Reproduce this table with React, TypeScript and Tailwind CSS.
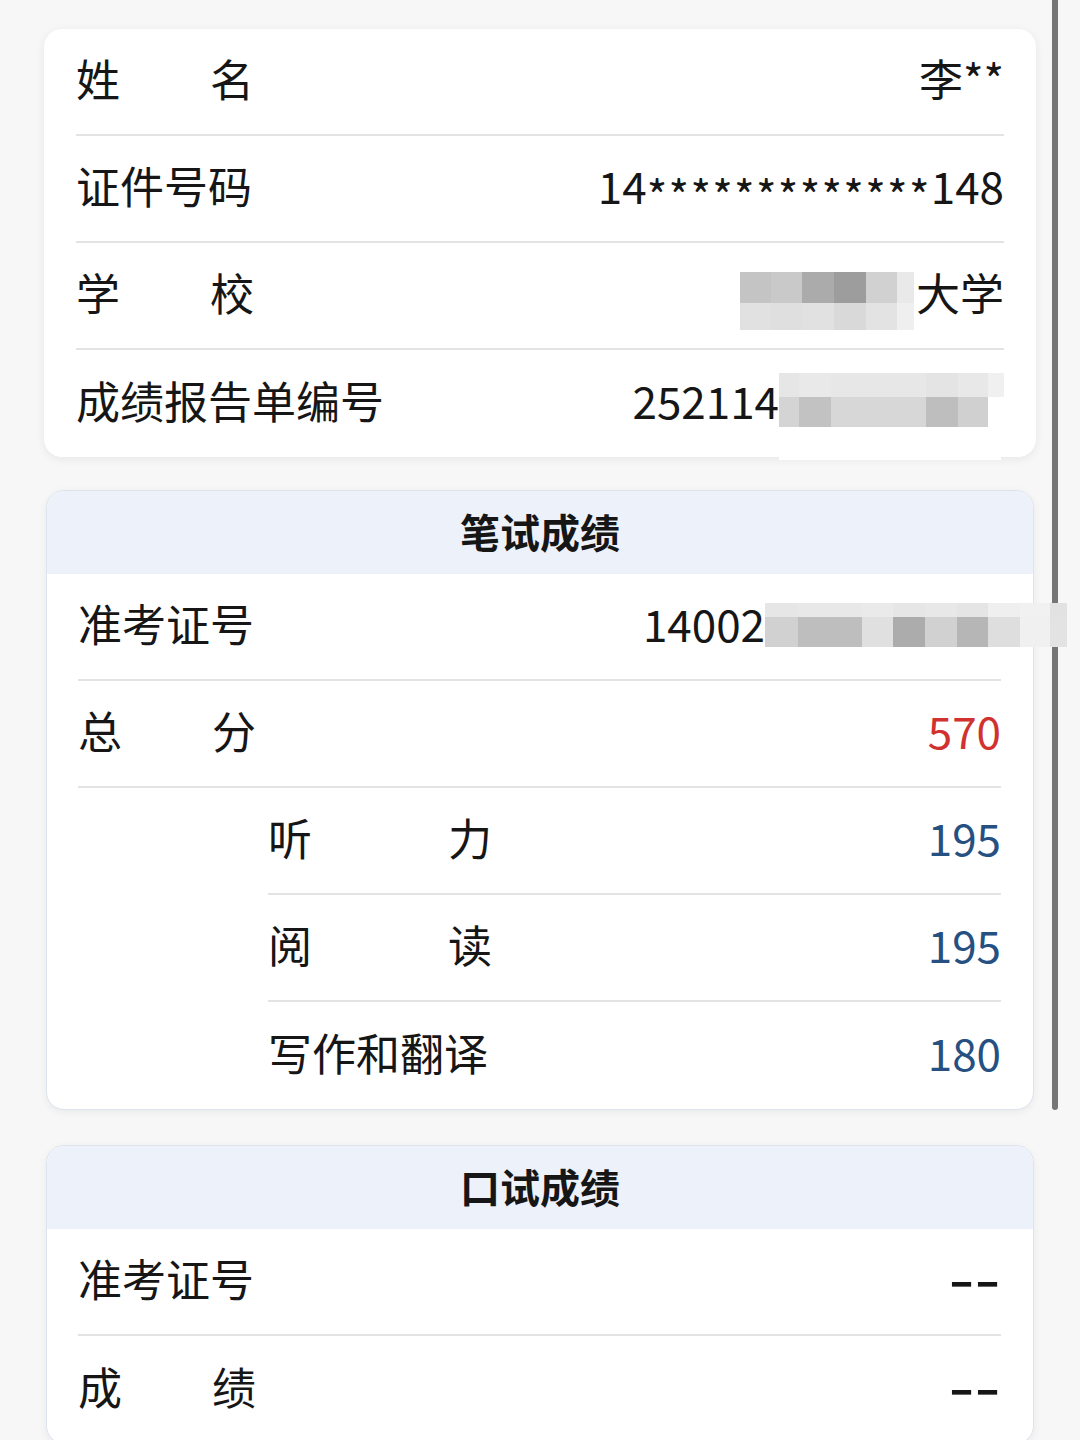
import React from "react";

const FONT = { fontFamily: '"Noto Sans CJK SC", "Noto Sans", sans-serif' };

type Cell = [number, string];

function Mosaic({ top, bottom, topH, bottomH }: { top: Cell[]; bottom: Cell[]; topH: number; bottomH: number }) {
  return (
    <span className="flex flex-col">
      <span className="flex">
        {top.map(([w, c], i) => (
          <span key={i} style={{ width: w, height: topH, background: c }} />
        ))}
      </span>
      <span className="flex">
        {bottom.map(([w, c], i) => (
          <span key={i} style={{ width: w, height: bottomH, background: c }} />
        ))}
      </span>
    </span>
  );
}

function Label({ chars, width }: { chars: string[]; width: string }) {
  return (
    <span className={`flex justify-between ${width}`}>
      {chars.map((c, i) => (
        <span key={i}>{c}</span>
      ))}
    </span>
  );
}

function Row({ children, last, indent }: { children: React.ReactNode; last?: boolean; indent?: boolean }) {
  return (
    <div className={`flex h-[107px] items-center justify-between pb-[8px] ${indent ? "ml-[190px]" : ""} ${last ? "" : "border-b-2 border-[#e3e3e3]"}`}>
      {children}
    </div>
  );
}

function Dashes() {
  return <span className="inline-block origin-right scale-x-[1.6] font-bold">--</span>;
}

export default function App() {
  return (
    <div className="relative min-h-[1440px] overflow-hidden bg-[#f7f7f7] text-[44px] leading-none text-[#161616]" style={FONT}>
      <div className="absolute left-[1052px] top-0 h-[1110px] w-[6px] rounded-b-full bg-[#767676]" />
      <div className="flex flex-col pl-[44px] pt-[29px]">
        {/* Card 1 */}
        <div className="w-[992px] rounded-[18px] bg-white px-[32px] shadow-[0_2px_10px_rgba(0,0,0,0.07)]">
          <Row>
            <Label chars={["姓", "名"]} width="w-[178px]" />
            <span>李**</span>
          </Row>
          <Row>
            <span>证件号码</span>
            <span className="flex items-center">
              <span>14</span>
              <span className="relative top-[9px] tracking-[1.3px]">*************</span>
              <span>148</span>
            </span>
          </Row>
          <Row>
            <Label chars={["学", "校"]} width="w-[178px]" />
            <span className="flex items-center">
              <span className="mr-[2px] mt-[19px] flex">
                <Mosaic
                  topH={31}
                  bottomH={27}
                  top={[[31, "#c4c4c4"], [31, "#c9c9c9"], [32, "#ababab"], [32, "#9d9d9d"], [31, "#d1d1d1"], [17, "#e9e9e9"]]}
                  bottom={[[31, "#e1e1e1"], [31, "#dfdfdf"], [32, "#e1e1e1"], [32, "#d9d9d9"], [31, "#e3e3e3"], [17, "#efefef"]]}
                />
              </span>
              <span>大学</span>
            </span>
          </Row>
          <Row last>
            <span>成绩报告单编号</span>
            <span className="flex items-center">
              <span>252114</span>
              <span className="relative mt-[1px] flex">
                <Mosaic
                  topH={24}
                  bottomH={30}
                  top={[[20, "#e6e6e6"], [32, "#e9e9e9"], [95, "#e7e7e7"], [32, "#e4e4e4"], [30, "#e8e8e8"], [16, "#f0f0f0"]]}
                  bottom={[[20, "#d4d4d4"], [32, "#c2c2c2"], [95, "#d7d7d7"], [32, "#bebebe"], [30, "#d0d0d0"], [16, "#ffffff"]]}
                />
                <span className="absolute left-0 top-[54px] h-[33px] w-[222px] bg-white" />
              </span>
            </span>
          </Row>
        </div>

        {/* Card 2 */}
        <div className="mt-[33px] ml-[2px] w-[988px] rounded-[18px] border border-[#dde4ef] bg-white shadow-[0_2px_8px_rgba(0,0,0,0.06)]">
          <div className="flex h-[83px] items-center justify-center rounded-t-[18px] bg-[#ecf1fa] pb-[4px] text-[40px] font-bold">笔试成绩</div>
          <div className="pl-[31px] pr-[32px]">
            <Row>
              <span>准考证号</span>
              <span className="flex items-center">
                <span>14002</span>
                <span className="relative z-10 mr-[-66px] mt-[5px] flex">
                  <Mosaic
                    topH={14}
                    bottomH={30}
                    top={[[33, "#e6e6e6"], [64, "#e8e8e8"], [31, "#eaeaea"], [32, "#e6e6e6"], [32, "#e8e8e8"], [31, "#e5e5e5"], [32, "#efefef"], [30, "#f1f1f1"], [17, "#e2e2e2"]]}
                    bottom={[[33, "#d1d1d1"], [64, "#bebebe"], [31, "#e0e0e0"], [32, "#acacac"], [32, "#d1d1d1"], [31, "#b6b6b6"], [32, "#dedede"], [30, "#f0f0f0"], [17, "#e3e3e3"]]}
                  />
                </span>
              </span>
            </Row>
            <Row>
              <Label chars={["总", "分"]} width="w-[178px]" />
              <span className="text-[#d1312f]">570</span>
            </Row>
            <Row indent>
              <Label chars={["听", "力"]} width="w-[224px]" />
              <span className="text-[#265082]">195</span>
            </Row>
            <Row indent>
              <Label chars={["阅", "读"]} width="w-[224px]" />
              <span className="text-[#265082]">195</span>
            </Row>
            <Row indent last>
              <span>写作和翻译</span>
              <span className="text-[#265082]">180</span>
            </Row>
          </div>
        </div>

        {/* Card 3 */}
        <div className="mt-[35px] ml-[2px] w-[988px] rounded-[18px] border border-[#dde4ef] bg-white shadow-[0_2px_8px_rgba(0,0,0,0.06)]">
          <div className="flex h-[83px] items-center justify-center rounded-t-[18px] bg-[#ecf1fa] pb-[4px] text-[40px] font-bold">口试成绩</div>
          <div className="pl-[31px] pr-[32px]">
            <Row>
              <span>准考证号</span>
              <Dashes />
            </Row>
            <Row last>
              <Label chars={["成", "绩"]} width="w-[178px]" />
              <Dashes />
            </Row>
          </div>
        </div>
      </div>
    </div>
  );
}
